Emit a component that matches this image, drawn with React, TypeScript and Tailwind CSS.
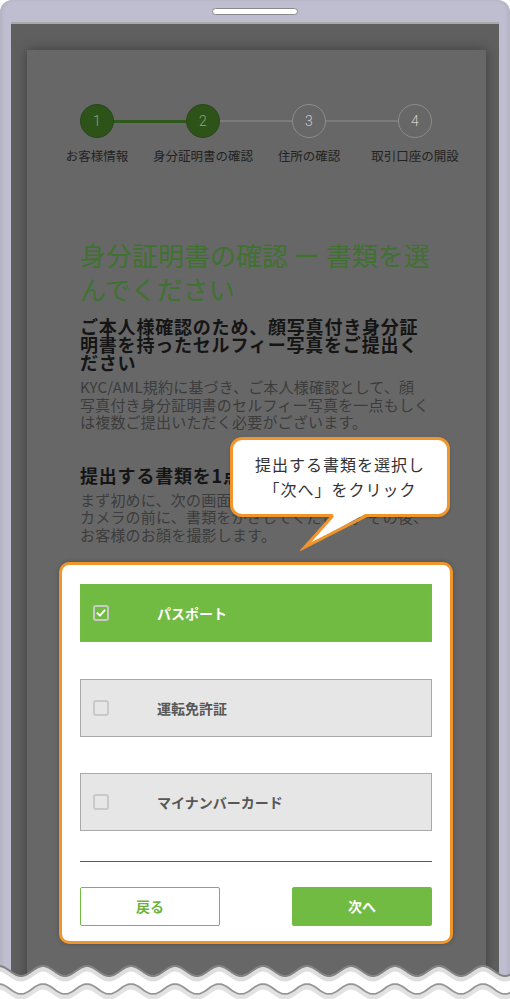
import React from 'react';

const STEPS = [
  { num: '1', label: 'お客様情報', done: true },
  { num: '2', label: '身分証明書の確認', done: true },
  { num: '3', label: '住所の確認', done: false },
  { num: '4', label: '取引口座の開設', done: false },
];

const OPTIONS = [
  { text: 'パスポート', checked: true },
  { text: '運転免許証', checked: false },
  { text: 'マイナンバーカード', checked: false },
];

// torn-paper edge at the bottom of the screenshot
const wave = (base: number) => {
  let d = '';
  for (let x = -2; x <= 512; x += 2) {
    const y = base - 5 * Math.cos((2 * Math.PI * (x - 43)) / 44);
    d += `${x === -2 ? 'M' : 'L'}${x} ${y.toFixed(2)} `;
  }
  return d;
};

const Checkbox: React.FC<{ checked: boolean }> = ({ checked }) => (
  <span className="flex h-[16px] w-[16px] items-center justify-center rounded-[3px] border-2 border-[#c9c9c9]">
    {checked && (
      <svg width="10" height="10" viewBox="0 0 10 10">
        <path d="M1.5 5.2 L4 7.6 L8.6 2.4" fill="none" stroke="#ffffff" strokeWidth="2" strokeLinecap="round" strokeLinejoin="round" />
      </svg>
    )}
  </span>
);

export default function App() {
  return (
    <div className="relative h-[999px] w-[510px] overflow-hidden bg-white font-['Noto_Sans_CJK_JP',sans-serif]">
      <div className="flex h-full flex-col rounded-t-[12px] bg-[#bfbed0] px-[11px] pt-[8px] shadow-[inset_3px_0_3px_rgba(0,0,0,0.05),inset_-3px_0_3px_rgba(0,0,0,0.05)]">
        <div className="mx-auto h-[7px] w-[86px] rounded-full border border-[#8a8a8a] bg-white" />
        <div className="mt-[7px] flex flex-1 flex-col border-t-2 border-[#a9a9a9] bg-[#5f5f5f] pl-[16px] pr-[13px] pt-[26px]">
          <div className="flex-1 bg-[#676767] pl-[53px] pr-[54px] pt-[54px] shadow-[0_0_12px_rgba(0,0,0,0.35)]">
            <div className="-mx-[36px] grid grid-cols-4">
              {STEPS.map((step, i) => (
                <div key={step.num} className="relative flex flex-col items-center">
                  {i < STEPS.length - 1 && (
                    <div
                      className={
                        STEPS[i + 1].done
                          ? 'absolute left-1/2 top-[16px] h-[3px] w-full bg-[#2f5a1c]'
                          : 'absolute left-1/2 top-[16px] h-[2px] w-full bg-[#7b7b7b]'
                      }
                    />
                  )}
                  <div
                    className={
                      step.done
                        ? "relative flex h-[34px] w-[34px] items-center justify-center rounded-full border border-[#29471a] bg-[#2e5319] font-['Roboto',sans-serif] text-[14px] font-light text-[#8ea37f]"
                        : "relative flex h-[34px] w-[34px] items-center justify-center rounded-full border-[1.5px] border-[#8c8c8c] bg-[#676767] font-['Roboto',sans-serif] text-[14px] font-light text-[#cdcdcd]"
                    }
                  >
                    {step.num}
                  </div>
                  <div className="mt-[9px] whitespace-nowrap text-[12.5px] leading-[18px] text-[#232323]">{step.label}</div>
                </div>
              ))}
            </div>

            <h1 className="mt-[73px] text-[26px] font-normal leading-[34px] text-[#3f7230]">
              身分証明書の確認 ー 書類を選
              <br />
              んでください
            </h1>
            <h2 className="mt-[11px] text-[18px] font-bold leading-[18px] tracking-[0.8px] text-[#151515]">
              ご本人様確認のため、顔写真付き身分証
              <br />
              明書を持ったセルフィー写真をご提出く
              <br />
              ださい
            </h2>
            <p className="mt-[7px] text-[15px] leading-[17.5px] tracking-[0.2px] text-[#3c3c3c]">
              KYC/AML規約に基づき、ご本人様確認として、顔
              <br />
              写真付き身分証明書のセルフィー写真を一点もしく
              <br />
              は複数ご提出いただく必要がございます。
            </p>
            <h2 className="mt-[35px] text-[18px] font-bold leading-[18px] tracking-[0.8px] text-[#151515]">
              提出する書類を1点選択してください
            </h2>
            <p className="mt-[7px] text-[15px] leading-[17.5px] tracking-[0.2px] text-[#3c3c3c]">
              まず初めに、次の画面で書類の種類を選択します。
              <br />
              カメラの前に、書類をかざしてください。その後、
              <br />
              お客様のお顔を撮影します。
            </p>

            <div className="-mx-[21px] mt-[19px] rounded-[10px] border-[3px] border-[#f0952b] bg-white px-[18px] pb-[15px] pt-[19px] shadow-[0_0_4px_rgba(0,0,0,0.25)]">
              {OPTIONS.map((opt, i) => (
                <div
                  key={opt.text}
                  className={
                    (i === 0 ? '' : i === 1 ? 'mt-[37px] ' : 'mt-[36px] ') +
                    (opt.checked
                      ? 'flex h-[58px] items-center border border-[#72bc43] bg-[#71bb42] pl-[12px]'
                      : 'flex h-[58px] items-center border border-[#a9a9a9] bg-[#e6e6e6] pl-[12px]')
                  }
                >
                  <Checkbox checked={opt.checked} />
                  <span className={opt.checked ? 'ml-[48px] text-[14px] font-bold text-white' : 'ml-[48px] text-[14px] font-bold text-[#575757]'}>
                    {opt.text}
                  </span>
                </div>
              ))}
              <div className="mt-[30px] h-px bg-[#5c5c5c] shadow-[0_3px_6px_rgba(0,0,0,0.06)]" />
              <div className="mt-[25px] flex justify-between">
                <button className="h-[39px] w-[140px] rounded-[2px] border border-[#72bc43] bg-white text-[14px] font-bold text-[#6cb33e]">戻る</button>
                <button className="h-[39px] w-[140px] rounded-[2px] bg-[#71bb42] text-[14px] font-bold text-white">次へ</button>
              </div>
            </div>
          </div>
        </div>
      </div>

      {/* callout */}
      <div className="absolute left-[230px] top-[437px] flex h-[80px] w-[220px] flex-col items-center justify-center rounded-[12px] border-[3px] border-[#f0952b] bg-white text-[16px] leading-[25px] tracking-[1px] text-[#333333] shadow-[0_1px_3px_rgba(0,0,0,0.2)]">
        <div>提出する書類を選択し</div>
        <div>「次へ」をクリック</div>
      </div>
      <svg className="absolute left-[300px] top-[512px]" width="72" height="40" viewBox="0 0 72 40">
        <polygon points="34,1.5 66,1.5 5,35" fill="#ffffff" />
        <polyline points="33,3.5 5,35 67,3.5" fill="none" stroke="#f0952b" strokeWidth="3" strokeMiterlimit="10" />
      </svg>

      {/* torn bottom edge */}
      <svg className="absolute bottom-0 left-0" width="510" height="45" viewBox="0 0 510 45">
        <path d={`${wave(17)} L512 45 L-2 45 Z`} fill="#ffffff" />
        <path d={wave(20)} fill="none" stroke="#dedede" strokeWidth="5" />
        <path d={wave(17)} fill="none" stroke="#848484" strokeWidth="2" />
        <path d={wave(38)} fill="none" stroke="#e2e2e2" strokeWidth="5" />
        <path d={wave(35)} fill="none" stroke="#959595" strokeWidth="1.8" />
      </svg>
    </div>
  );
}
